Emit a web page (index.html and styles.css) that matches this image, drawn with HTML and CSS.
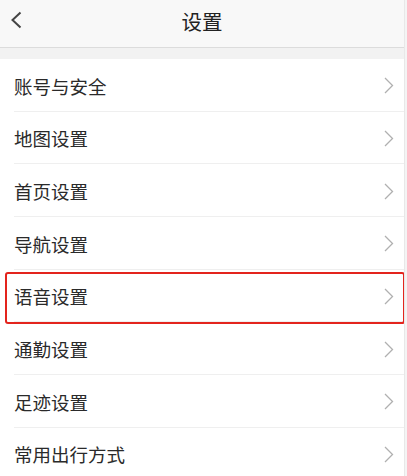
FILE: index.html
```html
<!DOCTYPE html>
<html lang="zh">
<head>
<meta charset="utf-8">
<link rel="stylesheet" href="styles.css">
</head>
<body>
<div class="page">
  <header class="topbar">
    <svg class="back" width="12" height="18" viewBox="0 0 12 18"><path d="M10.5 1.5 L2.5 9 L10.5 16.5" fill="none" stroke="#444" stroke-width="2" stroke-linejoin="miter"/></svg>
    <div class="title">设置</div>
  </header>
  <div class="gap"></div>
  <ul class="list">
    <li class="row"><span>账号与安全</span><svg class="chev" width="10" height="17" viewBox="0 0 10 17"><path d="M1 1 L8.5 8.5 L1 16" fill="none" stroke="#b0b0b0" stroke-width="1.3"/></svg></li>
    <li class="row"><span>地图设置</span><svg class="chev" width="10" height="17" viewBox="0 0 10 17"><path d="M1 1 L8.5 8.5 L1 16" fill="none" stroke="#b0b0b0" stroke-width="1.3"/></svg></li>
    <li class="row"><span>首页设置</span><svg class="chev" width="10" height="17" viewBox="0 0 10 17"><path d="M1 1 L8.5 8.5 L1 16" fill="none" stroke="#b0b0b0" stroke-width="1.3"/></svg></li>
    <li class="row"><span>导航设置</span><svg class="chev" width="10" height="17" viewBox="0 0 10 17"><path d="M1 1 L8.5 8.5 L1 16" fill="none" stroke="#b0b0b0" stroke-width="1.3"/></svg></li>
    <li class="row highlighted"><span>语音设置</span><svg class="chev" width="10" height="17" viewBox="0 0 10 17"><path d="M1 1 L8.5 8.5 L1 16" fill="none" stroke="#b0b0b0" stroke-width="1.3"/></svg><div class="mark"></div></li>
    <li class="row"><span>通勤设置</span><svg class="chev" width="10" height="17" viewBox="0 0 10 17"><path d="M1 1 L8.5 8.5 L1 16" fill="none" stroke="#b0b0b0" stroke-width="1.3"/></svg></li>
    <li class="row"><span>足迹设置</span><svg class="chev" width="10" height="17" viewBox="0 0 10 17"><path d="M1 1 L8.5 8.5 L1 16" fill="none" stroke="#b0b0b0" stroke-width="1.3"/></svg></li>
    <li class="row"><span>常用出行方式</span><svg class="chev" width="10" height="17" viewBox="0 0 10 17"><path d="M1 1 L8.5 8.5 L1 16" fill="none" stroke="#b0b0b0" stroke-width="1.3"/></svg></li>
  </ul>
</div>
</body>
</html>
```
FILE: styles.css
```css
html, body {
  margin: 0;
  padding: 0;
  background: #f4f4f4;
}
body {
  font-family: "Noto Sans CJK SC", "Noto Sans", sans-serif;
  color: #333;
  overflow: hidden;
}
.page {
  width: 404px;
  height: 476px;
  background: #fff;
  border-right: 1px solid #e8e8e8;
  overflow: hidden;
}
.topbar {
  height: 47px;
  background: #f8f8f8;
  border-bottom: 1px solid #dcdcdc;
  display: flex;
  align-items: center;
  justify-content: center;
  position: relative;
}
.back {
  position: absolute;
  left: 10px;
  top: 11px;
}
.title {
  font-size: 20.5px;
  color: #222;
  line-height: 1;
  margin-top: -4px;
}
.gap {
  height: 11px;
  background: #f2f2f2;
}
.list {
  list-style: none;
  margin: 0;
  padding: 0;
}
.row {
  height: 52.67px;
  box-sizing: border-box;
  border-bottom: 1px solid #efefef;
  margin-left: 14px;
  padding-right: 10px;
  display: flex;
  align-items: center;
  justify-content: space-between;
  font-size: 18.5px;
  color: #2a2a2a;
  position: relative;
}
.row span {
  margin-top: 2px;
}
.chev {
  margin-top: 2px;
}
.mark {
  position: absolute;
  left: -9px;
  right: -1px;
  top: 2px;
  bottom: -3px;
  border: 2px solid #e3241d;
  border-radius: 3px;
}
```
